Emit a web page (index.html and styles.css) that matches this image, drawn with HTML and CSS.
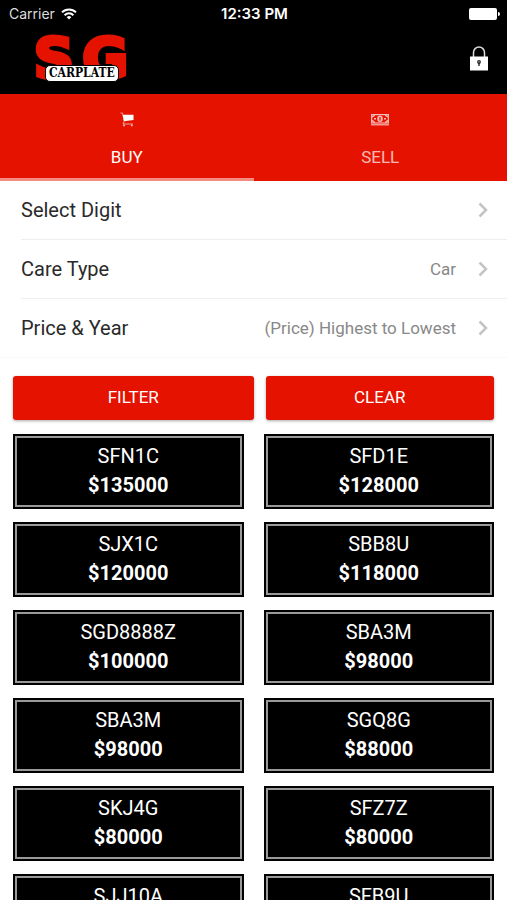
FILE: index.html
```
<!DOCTYPE html>
<html lang="en">
<head>
<meta charset="utf-8">
<meta name="viewport" content="width=device-width, initial-scale=1">
<title>SG Carplate</title>
<link rel="stylesheet" href="styles.css">
</head>
<body>
<div class="app">
  <header class="top">
    <div class="status">
      <div class="carrier">
        <span>Carrier</span>
        <svg width="16" height="12" viewBox="0 0 16 12" fill="none" stroke="#fff" stroke-width="2"><path d="M1 4.4a10 10 0 0 1 14 0M3.6 7.2a6.2 6.2 0 0 1 8.8 0"/><path d="M8 11.6 5.7 9.2a3.3 3.3 0 0 1 4.6 0z" fill="#fff" stroke="none"/></svg>
      </div>
      <time class="clock">12:33 PM</time>
      <svg class="battery" width="31" height="12" viewBox="0 0 31 12" fill="#fff"><rect width="28" height="12" rx="2"/><path d="M29 4q2 0 2 2t-2 2z"/></svg>
    </div>
    <div class="brand-row">
      <div class="logo">
        <div class="logo-initials"><span>S</span><span>G</span></div>
        <div class="logo-plate">CARPLATE</div>
      </div>
      <button class="lock" type="button" aria-label="Log in">
        <svg width="20" height="25" viewBox="0 0 20 25"><path d="M4.500 12V6.500a5.500 5.500 0 0 1 11 0V12" fill="none" stroke="#ddd" stroke-width="1.500"/><rect x="1" y="10.500" width="18" height="14" fill="#fff"/><circle cx="10" cy="16" r="1.900" fill="#222"/><circle cx="10" cy="15.800" r=".6" fill="#fff"/><path d="M9.300 17h1.400v3H9.300z" fill="#222"/></svg>
      </button>
    </div>
  </header>

  <nav class="tabs">
    <a class="tab tab-active" href="#buy">
      <svg width="14" height="15" viewBox="0 0 14 15"><path d="M.5 1h2l1.700 8.500L3 12h10" fill="none" stroke="#fff" stroke-opacity=".75" stroke-width=".8"/><path d="M2.800 2.700H13.500V8L4 9.200z" fill="#fff"/><circle cx="4" cy="13.400" r=".9" fill="#fff" fill-opacity=".8"/><circle cx="11.800" cy="13.400" r=".9" fill="#fff" fill-opacity=".8"/></svg>
      <span>BUY</span>
    </a>
    <a class="tab" href="#sell">
      <svg width="18" height="15" viewBox="0 0 18 15" fill="none" stroke="#fff"><rect x=".6" y="2.600" width="16.800" height="8.400" stroke-width="1.200"/><path d="M0 12.800h18" stroke-width="1.200"/><ellipse cx="9" cy="6.800" rx="2.800" ry="3.200" fill="#fff" stroke="none"/><path d="M9 5v3.600" stroke="#e51200" stroke-width="1.200"/><path d="M1 5.200l2.800-2.200M1 8.400l2.800 2.200M17 5.200l-2.800-2.200M17 8.400l-2.800 2.200M3 6.800h2M13 6.800h2" stroke-width="1.500"/></svg>
      <span>SELL</span>
    </a>
  </nav>

  <main class="content">
    <div class="options">
      <button class="option" type="button"><span class="option-name">Select Digit</span><span class="option-value"></span><svg class="chevron" viewBox="0 0 10 16"><path d="M1.500 1.500 8 8l-6.500 6.500"/></svg></button>
      <button class="option" type="button"><span class="option-name">Care Type</span><span class="option-value">Car</span><svg class="chevron" viewBox="0 0 10 16"><path d="M1.500 1.500 8 8l-6.500 6.500"/></svg></button>
      <button class="option" type="button"><span class="option-name">Price &amp; Year</span><span class="option-value">(Price) Highest to Lowest</span><svg class="chevron" viewBox="0 0 10 16"><path d="M1.500 1.500 8 8l-6.500 6.500"/></svg></button>
    </div>
    <div class="actions">
      <button class="action action-filter" type="button">FILTER</button>
      <button class="action action-clear" type="button">CLEAR</button>
    </div>
    <div class="plates">
      <a class="plate" href="#p1"><span>SFN1C</span><strong>$135000</strong></a>
      <a class="plate" href="#p2"><span>SFD1E</span><strong>$128000</strong></a>
      <a class="plate" href="#p3"><span>SJX1C</span><strong>$120000</strong></a>
      <a class="plate" href="#p4"><span>SBB8U</span><strong>$118000</strong></a>
      <a class="plate" href="#p5"><span>SGD8888Z</span><strong>$100000</strong></a>
      <a class="plate" href="#p6"><span>SBA3M</span><strong>$98000</strong></a>
      <a class="plate" href="#p7"><span>SBA3M</span><strong>$98000</strong></a>
      <a class="plate" href="#p8"><span>SGQ8G</span><strong>$88000</strong></a>
      <a class="plate" href="#p9"><span>SKJ4G</span><strong>$80000</strong></a>
      <a class="plate" href="#p10"><span>SFZ7Z</span><strong>$80000</strong></a>
      <a class="plate" href="#p11"><span>SJJ10A</span></a>
      <a class="plate" href="#p12"><span>SFB9U</span></a>
    </div>
  </main>
</div>
</body>
</html>
```
FILE: styles.css
```
* { box-sizing: border-box; }
body {
  margin: 0;
  background: #fff;
  color: #2a2a2a;
  font-family: Roboto, "Liberation Sans", sans-serif;
}
button { font: inherit; color: inherit; border: 0; padding: 0; background: none; cursor: pointer; }
a { color: inherit; text-decoration: none; }
svg { display: block; }

.app { display: flex; flex-direction: column; height: 100vh; }

.top { background: #000; color: #fff; }
.status {
  display: grid;
  grid-template-columns: 1fr auto 1fr;
  align-items: center;
  height: 27px;
  padding: 0 7px 0 9px;
  font-family: Inter, "Liberation Sans", sans-serif;
  font-size: 14px;
}
.carrier { display: flex; align-items: center; gap: 6px; color: #ddd; }
.clock { font-size: 15px; font-weight: 600; }
.battery { justify-self: end; }

.brand-row {
  display: flex;
  align-items: center;
  justify-content: space-between;
  height: 67px;
  padding: 0 18px 4px 28px;
}
.logo { position: relative; width: 106px; height: 50px; }
.logo-initials {
  display: flex;
  justify-content: center;
  gap: 8px;
  color: #e51200;
  font: bold 56px/48px "DejaVu Sans", "Liberation Sans", sans-serif;
  -webkit-text-stroke: 4px #e51200;
}
.logo-plate {
  position: absolute;
  left: 17px;
  top: 31px;
  padding: 0 3px;
  border: 1px solid #000;
  border-radius: 5px;
  background: #fff;
  color: #000;
  font: bold 12px/15px "DejaVu Serif Condensed", "DejaVu Serif", serif;
}

.tabs { display: flex; background: #e51200; color: #fff; }
.tab {
  flex: 1;
  display: flex;
  flex-direction: column;
  align-items: center;
  gap: 20px;
  height: 87px;
  padding-top: 18px;
  border-bottom: 3px solid transparent;
  font-size: 17px;
  line-height: 20px;
}
.tab > * { opacity: 0.7; }
.tab-active { border-color: #f28b80; }
.tab-active > * { opacity: 1; }

.content { flex: 1; min-height: 0; overflow-y: auto; scrollbar-width: none; }
.option {
  position: relative;
  display: flex;
  align-items: center;
  width: 100%;
  height: 59px;
  padding: 0 19px 1px 21px;
  text-align: left;
}
.option-name { flex: 1; font-size: 20px; }
.option-value { color: #888; font-size: 17px; }
.option::after {
  content: "";
  position: absolute;
  left: 21px;
  right: 0;
  bottom: 0;
  border-bottom: 1px solid #eee;
}
.option:last-child::after { left: 0; border-color: #f9f9f9; }
.chevron { width: 10px; height: 16px; margin-left: 22px; fill: none; stroke: #c4c4c4; stroke-width: 2.5; }

.actions { display: flex; gap: 12px; padding: 18px 13px 14px; }
.action {
  height: 44px;
  padding-bottom: 2px;
  border-radius: 3px;
  background: #e51200;
  box-shadow: 0 1px 3px rgba(0, 0, 0, 0.35);
  color: #fff;
  font-size: 17px;
}
.action-filter { flex: 20 1 0; }
.action-clear { flex: 19 1 0; }

.plates { display: grid; grid-template-columns: 1fr 1fr; gap: 13px 20px; padding: 0 13px 12px; }
.plate {
  height: 75px;
  padding-top: 8px;
  background: #000;
  outline: 2px solid #999;
  outline-offset: -4px;
  color: #fff;
  font-size: 20px;
  line-height: 29px;
  text-align: center;
}
.plate > * { display: block; }
```
